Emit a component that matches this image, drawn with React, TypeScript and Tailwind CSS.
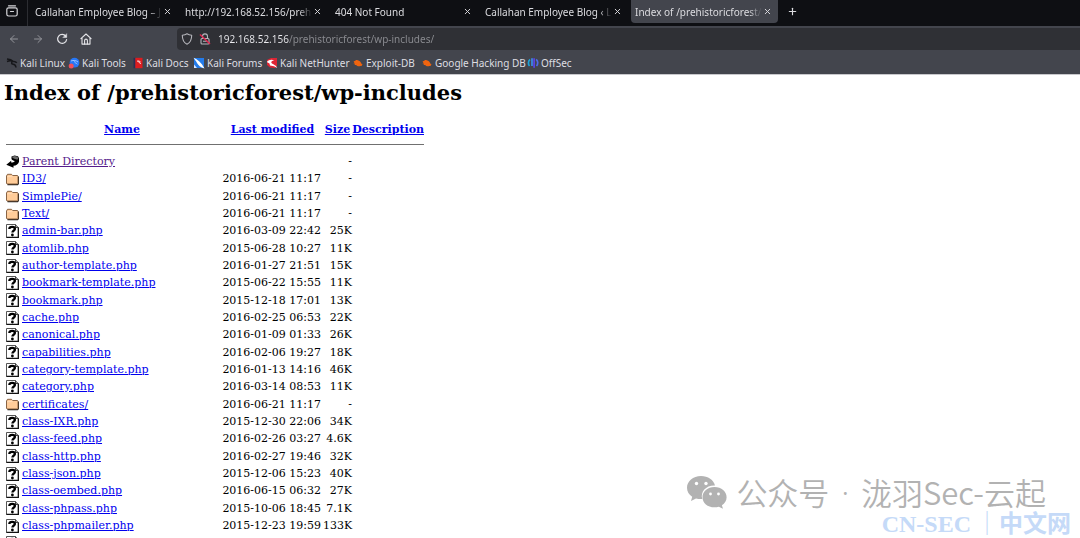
import React, { useState } from "react";
import { ArrowLeft, ArrowRight, Plus, X } from "lucide-react";

type EntryKind = "parent" | "dir" | "file";

type Entry = {
  kind: EntryKind;
  name: string;
  modified?: string;
  size: string;
};

const ENTRIES: Entry[] = [
  { kind: "parent", name: "Parent Directory", size: "-" },
  { kind: "dir", name: "ID3/", modified: "2016-06-21 11:17", size: "-" },
  { kind: "dir", name: "SimplePie/", modified: "2016-06-21 11:17", size: "-" },
  { kind: "dir", name: "Text/", modified: "2016-06-21 11:17", size: "-" },
  { kind: "file", name: "admin-bar.php", modified: "2016-03-09 22:42", size: "25K" },
  { kind: "file", name: "atomlib.php", modified: "2015-06-28 10:27", size: "11K" },
  { kind: "file", name: "author-template.php", modified: "2016-01-27 21:51", size: "15K" },
  { kind: "file", name: "bookmark-template.php", modified: "2015-06-22 15:55", size: "11K" },
  { kind: "file", name: "bookmark.php", modified: "2015-12-18 17:01", size: "13K" },
  { kind: "file", name: "cache.php", modified: "2016-02-25 06:53", size: "22K" },
  { kind: "file", name: "canonical.php", modified: "2016-01-09 01:33", size: "26K" },
  { kind: "file", name: "capabilities.php", modified: "2016-02-06 19:27", size: "18K" },
  { kind: "file", name: "category-template.php", modified: "2016-01-13 14:16", size: "46K" },
  { kind: "file", name: "category.php", modified: "2016-03-14 08:53", size: "11K" },
  { kind: "dir", name: "certificates/", modified: "2016-06-21 11:17", size: "-" },
  { kind: "file", name: "class-IXR.php", modified: "2015-12-30 22:06", size: "34K" },
  { kind: "file", name: "class-feed.php", modified: "2016-02-26 03:27", size: "4.6K" },
  { kind: "file", name: "class-http.php", modified: "2016-02-27 19:46", size: "32K" },
  { kind: "file", name: "class-json.php", modified: "2015-12-06 15:23", size: "40K" },
  { kind: "file", name: "class-oembed.php", modified: "2016-06-15 06:32", size: "27K" },
  { kind: "file", name: "class-phpass.php", modified: "2015-10-06 18:45", size: "7.1K" },
  { kind: "file", name: "class-phpmailer.php", modified: "2015-12-23 19:59", size: "133K" },
  { kind: "file", name: "class-pop3.php", modified: "2015-06-28 10:27", size: "20K" }
];

const TABS = [
  "Callahan Employee Blog – Jus",
  "http://192.168.52.156/prehist",
  "404 Not Found",
  "Callahan Employee Blog ‹ Log",
  "Index of /prehistoricforest/wp"
];

function EntryIcon(props: { kind: EntryKind }) {
  if (props.kind === "parent") {
    return (
      <svg viewBox="0 0 13 14" className="block h-[14px] w-[13px]">
        <path d="M5.500 1.500 8.500.6l3.500.6 1 2v3.600c-.4 2.400-2.800 3.900-5.500 4v2L.3 9.800 5.200 5.800v1.800c1.500 0 3-.5 3.600-1.500-1.300-.2-2.900-.9-3.300-2z" fill="#000" />
        <path d="M6 1.800 8.700 1l3 .7.5 2.200c-.8.9-2.300.6-3 .2C8 3.600 6.500 3.200 6 1.800z" fill="#6b6b6b" />
      </svg>
    );
  }
  if (props.kind === "dir") {
    return (
      <svg viewBox="0 0 13 14" className="block h-[14px] w-[13px]">
        <path d="M1.500 12.500h10l1-1V4.500" stroke="#222" strokeWidth="1.400" fill="none" />
        <path d="M.5 4 1.500 2.300h4L6.500 3.500h5l.5 1v7l-.5.5H1l-.5-.8z" fill="#ffcc99" stroke="#7a5535" strokeWidth=".9" />
        <path d="M1.200 4.700h4.600l1-.7" stroke="#ffe6cc" strokeWidth=".7" fill="none" />
      </svg>
    );
  }
  return (
    <svg viewBox="0 0 13 14" className="block h-[14px] w-[13px]">
      <path d="M.5.5h9l3 3v10H.5z" fill="#fff" stroke="#555" strokeWidth="1" />
      <path d="M12.300 3.500v10H.5" stroke="#111" strokeWidth="1.300" fill="none" />
      <path d="M9.500.5v3h3" fill="#999" stroke="#333" strokeWidth=".9" />
      <path d="M3.300 5c.1-1.500 1.200-2.100 2.900-2.100 1.600 0 2.700.7 2.700 2 0 1.500-2.400 1.700-2.500 3.600" stroke="#000" strokeWidth="2.300" fill="none" />
      <circle cx="6.400" cy="11" r="1.400" fill="#000" />
    </svg>
  );
}

function FirefoxViewIcon() {
  return (
    <svg viewBox="0 0 12 12" className="h-3 w-3" fill="none" stroke="#d6d6da" strokeWidth="1.200" strokeLinecap="round">
      <path d="M2.500.8h7" />
      <rect x=".8" y="2.800" width="10.400" height="8.200" rx="1.800" />
      <path d="M4.500 6.500h3" />
    </svg>
  );
}

function ReloadIcon() {
  return (
    <svg viewBox="0 0 12 12" className="h-3 w-3" fill="none" stroke="#e4e4e8" strokeWidth="1.200" strokeLinecap="round">
      <path d="M9.800 3.300A4.500 4.500 0 1 0 10.600 6.500" />
      <path d="M10.700 1v3.500H7.200z" fill="#e4e4e8" strokeWidth=".5" />
    </svg>
  );
}

function HomeIcon() {
  return (
    <svg viewBox="0 0 12 12" className="h-3 w-3" fill="none" stroke="#e4e4e8" strokeWidth="1.100" strokeLinejoin="round" strokeLinecap="round">
      <path d="M.9 5.600 6 1l5.100 4.600M2 4.900v6.200h8V4.900" />
      <path d="M4.600 11V7.500a1.400 1.400 0 0 1 2.800 0V11" />
    </svg>
  );
}

function ShieldIcon() {
  return (
    <svg viewBox="0 0 12 12" className="h-3 w-3" fill="none" stroke="#b4b4ba" strokeWidth="1.100" strokeLinejoin="round">
      <path d="M6 .8c1.500 1 3 1.300 4.700 1.400 0 4-1 7.200-4.700 9-3.700-1.800-4.700-5-4.700-9C3 2.100 4.500 1.800 6 .8z" />
    </svg>
  );
}

function InsecureIcon() {
  return (
    <svg viewBox="0 0 12 12" className="h-3 w-3" fill="none" stroke="#b4b4ba" strokeWidth="1.100">
      <rect x="2" y="5.500" width="8" height="5.500" rx="1" />
      <path d="M3.500 5.500V3.400a2.500 2.500 0 0 1 5 0v2.100M4 8.200h4" />
      <path d="m1 1.500 10 9.500" stroke="#e22850" strokeWidth="1.400" />
    </svg>
  );
}

function ExploitIcon() {
  return (
    <svg viewBox="0 0 12 12" className="h-3 w-3">
      <path d="M1.500 4.200 3 4l1-.9c2-.3 3.700.8 4.500 2l1 1.700 1.200.9-1 .4.200 1-1.600-.1c-1.300.7-3.300.2-4.200-1L2.500 8l.6-1.200-1.700-.6 1-.6z" fill="#f0640f" />
    </svg>
  );
}

const BOOKMARKS: { label: string; width: string; icon: React.ReactNode }[] = [
  {
    label: "Kali Linux",
    width: "w-[62px]",
    icon: (
      <svg viewBox="0 0 12 12" className="h-3 w-3" fill="none" stroke="#16171a">
        <path d="M1 2c2.500.2 4.500.7 6 2.200M1 4.500c2-.8 4-.9 6-.3 1.500.2 3 .5 3.800 1.600M7 4.200c-2 1-1.800 3 .2 3.100 1.600.1 2.500 1 2.800 3.200" strokeWidth="1.500" />
      </svg>
    )
  },
  {
    label: "Kali Tools",
    width: "w-[64px]",
    icon: (
      <svg viewBox="0 0 12 12" className="h-3 w-3">
        <circle cx="6.500" cy="5.700" r="4.900" fill="#2777f5" />
        <path d="M3 4c2.500-1 5-.6 7 1M6.500 4.300c0 1.800 2 1.500 2.800 3" stroke="#a9cbff" strokeWidth=".9" fill="none" />
        <circle cx="3.200" cy="9" r="2.500" fill="#f0505a" />
      </svg>
    )
  },
  {
    label: "Kali Docs",
    width: "w-[61px]",
    icon: (
      <svg viewBox="0 0 12 12" className="h-3 w-3">
        <path d="M1.500.8h2v10.400h-2z" fill="#2b2e55" />
        <path d="M3.300.8h7.200v10.400H3.300z" fill="#dd1c1f" />
        <path d="M5 4.200c1.500-.5 2.500 0 3.600.8M6.500 4.600c0 1.200 1.800.6 2 2.300" stroke="#fff" strokeWidth=".9" fill="none" />
      </svg>
    )
  },
  {
    label: "Kali Forums",
    width: "w-[73px]",
    icon: (
      <svg viewBox="0 0 12 12" className="h-3 w-3">
        <path d="M1 1h10v10H1z" fill="#237bea" />
        <path d="M.5.8c4 1.500 8 5 11 10.700-3.800-1-6.500-3.500-7.500-5.500C3 4 2 3 .5.800z" fill="#fff" />
        <path d="m1 7.500 3 3.500H1z" fill="#dfeaff" />
      </svg>
    )
  },
  {
    label: "Kali NetHunter",
    width: "w-[86px]",
    icon: (
      <svg viewBox="0 0 12 12" className="h-3 w-3">
        <path d="M1 3 5 1h6v8l-2 2-5-.5L1 8z" fill="#dd2534" />
        <path d="M.8 5C3 2.500 6 2.300 8.500 3.600 6 3.800 4.500 5 5.800 6.300c1.300 1.300 4.200 1.500 5.400 4.700L8 9.200 4 8.500 3.500 6.500z" fill="#fff" />
      </svg>
    )
  },
  { label: "Exploit-DB", width: "w-[69px]", icon: <ExploitIcon /> },
  { label: "Google Hacking DB", width: "w-[106px]", icon: <ExploitIcon /> },
  {
    label: "OffSec",
    width: "w-[50px]",
    icon: (
      <svg viewBox="0 0 12 12" className="h-3 w-3" fill="none" strokeWidth="1.700">
        <path d="M3 2.500C1 4 1 7.500 2.500 9" stroke="#1ba3d8" />
        <path d="M5 1.200v7.800" stroke="#3a8bea" />
        <path d="M7.100 1.200v9.600" stroke="#5a45e8" />
        <path d="M9.200 2.300c2 1.700 2 5 .3 6.700" stroke="#4f6bea" />
      </svg>
    )
  }
];

function TabStrip() {
  const [active, setActive] = useState(4);

  return (
    <div className="flex h-[26px] items-start bg-[#0e0f13] text-[#dcdce0]">
      <button type="button" aria-label="Firefox View" className="flex h-[26px] w-7 shrink-0 items-center justify-center border-r border-[#2c2d32] pb-1 pr-1">
        <FirefoxViewIcon />
      </button>
      <div className="flex pl-[2px]" role="tablist">
        {TABS.map((title, i) => (
          <div key={title} className="w-[150px] pr-[2px] pl-px">
            <div className={["flex h-[23px] items-center rounded-b-sm pl-1", i === active ? "bg-[#43454d]" : ""].join(" ")}>
              <button
                type="button"
                role="tab"
                aria-selected={i === active}
                onClick={() => setActive(i)}
                className="w-[127px] shrink-0 overflow-hidden text-left whitespace-nowrap mask-[linear-gradient(to_right,#000_114px,transparent_127px)]"
              >
                {title}
              </button>
              <button type="button" aria-label="Close tab" className="flex w-[11px] items-center justify-center">
                <X className="h-[9px] w-[9px]" strokeWidth={2.5} />
              </button>
            </div>
          </div>
        ))}
      </div>
      <button type="button" aria-label="New tab" className="flex h-[23px] w-6 items-center justify-center">
        <Plus className="h-[11px] w-[11px]" strokeWidth={2.5} />
      </button>
    </div>
  );
}

function Toolbar() {
  return (
    <div className="flex h-[26px] items-center">
      <div className="flex w-[177px] shrink-0 items-center gap-3 pl-2">
        <button type="button" aria-label="Back" disabled className="text-[#94959b]">
          <ArrowLeft className="h-3 w-3" strokeWidth={2} />
        </button>
        <button type="button" aria-label="Forward" disabled className="text-[#94959b]">
          <ArrowRight className="h-3 w-3" strokeWidth={2} />
        </button>
        <button type="button" aria-label="Reload">
          <ReloadIcon />
        </button>
        <button type="button" aria-label="Home">
          <HomeIcon />
        </button>
      </div>
      <div className="flex h-[22px] flex-1 items-center gap-[6px] rounded-l-sm bg-[#2f3035] pl-1">
        <ShieldIcon />
        <InsecureIcon />
        {/* host part is lighter than the path */}
        <input
          aria-label="Address"
          defaultValue="192.168.52.156/prehistoricforest/wp-includes/"
          className="w-full flex-1 bg-[linear-gradient(to_right,#ececf0_72px,#8c8d92_72px)] bg-clip-text pl-px text-transparent caret-white outline-none"
        />
      </div>
    </div>
  );
}

function BookmarksBar() {
  return (
    <nav className="flex h-[22px] items-center pl-[6px] text-[#dedee2]">
      {BOOKMARKS.map((b) => (
        <a key={b.label} href="#" className={["flex shrink-0 items-center gap-[2px] whitespace-nowrap", b.width].join(" ")}>
          <span className="shrink-0">{b.icon}</span>
          {b.label}
        </a>
      ))}
    </nav>
  );
}

function Listing() {
  return (
    <main className="min-h-0 flex-1 overflow-hidden px-1 pt-1 font-['DejaVu_Serif',serif] text-[11px] leading-[15px] text-black">
      <h1 className="text-[21px] leading-7 font-bold">Index of /prehistoricforest/wp-includes</h1>
      <table className="mt-3 ml-[2px] w-[418px] table-fixed border-collapse">
        <colgroup>
          <col className="w-4" />
          <col className="w-[200px]" />
          <col className="w-[101px]" />
          <col className="w-[29px]" />
          <col />
        </colgroup>
        <thead>
          <tr className="text-[#0000ee] underline">
            <th />
            <th className="pt-[3px] pb-[7px]"><a href="#">Name</a></th>
            <th className="pt-[3px] pb-[7px]"><a href="#">Last modified</a></th>
            <th className="pt-[3px] pb-[7px]"><a href="#">Size</a></th>
            <th className="pt-[3px] pb-[7px] text-right"><a href="#">Description</a></th>
          </tr>
        </thead>
        <tbody>
          <tr>
            <td colSpan={5} className="pb-2">
              <hr className="border-[#707070]" />
            </td>
          </tr>
          {ENTRIES.map((e) => (
            <tr key={e.name} className="h-[17px] whitespace-nowrap nth-[3n+1]:h-[18px]">
              <td className="p-0">
                <EntryIcon kind={e.kind} />
              </td>
              <td className="p-0">
                <a href="#" className={["underline", e.kind === "parent" ? "text-[#551a8b]" : "text-[#0000ee]"].join(" ")}>
                  {e.name}
                </a>
              </td>
              <td className="p-0 pr-[2px] text-right">{e.modified}</td>
              <td className="p-0 text-right">{e.size}</td>
              <td />
            </tr>
          ))}
        </tbody>
      </table>
    </main>
  );
}

function Watermark() {
  return (
    <div className="pointer-events-none absolute right-[9px] bottom-0 flex flex-col items-end font-['Noto_Sans_CJK_SC',sans-serif] whitespace-nowrap">
      <div className="flex items-center gap-2 pr-[25px] text-[31px] leading-9 text-[#b2b2b2]">
        <svg viewBox="0 0 42 34" className="h-[34px] w-[42px]" fill="#b2b2b2">
          <path d="M15 1C7 1 1 6.200 1 12.700c0 3.800 2 7 5.200 9.100L5 26l5-2.600c2 .6 4 .8 6.300.7C14 16.500 20.500 10 29 10.500 27.800 5 22 1 15 1z" />
          <path d="M28.500 12C21.500 12 16.500 16.500 16.500 22.200s5 10.100 12 10.100c1.500 0 3-.2 4.300-.6l4.200 2.100-1.100-3.600c2.900-1.900 4.700-4.700 4.700-8C40.600 16.500 35.500 12 28.500 12z" />
          <g fill="#fff">
            <circle cx="10.500" cy="8.500" r="1.700" />
            <circle cx="20" cy="8.500" r="1.700" />
            <circle cx="24.500" cy="19" r="1.400" />
            <circle cx="32.500" cy="19" r="1.400" />
          </g>
        </svg>
        <div className="flex font-[350]">
          <span>公众号</span>
          <span className="px-3 font-['Noto_Sans',sans-serif]">·</span>
          <span>泷羽Sec-云起</span>
        </div>
      </div>
      <div className="font-['Liberation_Serif','Noto_Sans_CJK_SC',serif] text-2xl leading-7 text-[#c5daf8]">
        <b className="mr-1">CN-SEC</b>｜<b>中文网</b>
      </div>
    </div>
  );
}

export default function App() {
  return (
    <div className="relative flex h-screen flex-col overflow-hidden bg-white">
      <header className="shrink-0 border-b border-[#c8c8cc] bg-[#43454d] font-['Noto_Sans',sans-serif] text-[10px] leading-[14px]">
        <TabStrip />
        <Toolbar />
        <BookmarksBar />
      </header>
      <Listing />
      <Watermark />
    </div>
  );
}
